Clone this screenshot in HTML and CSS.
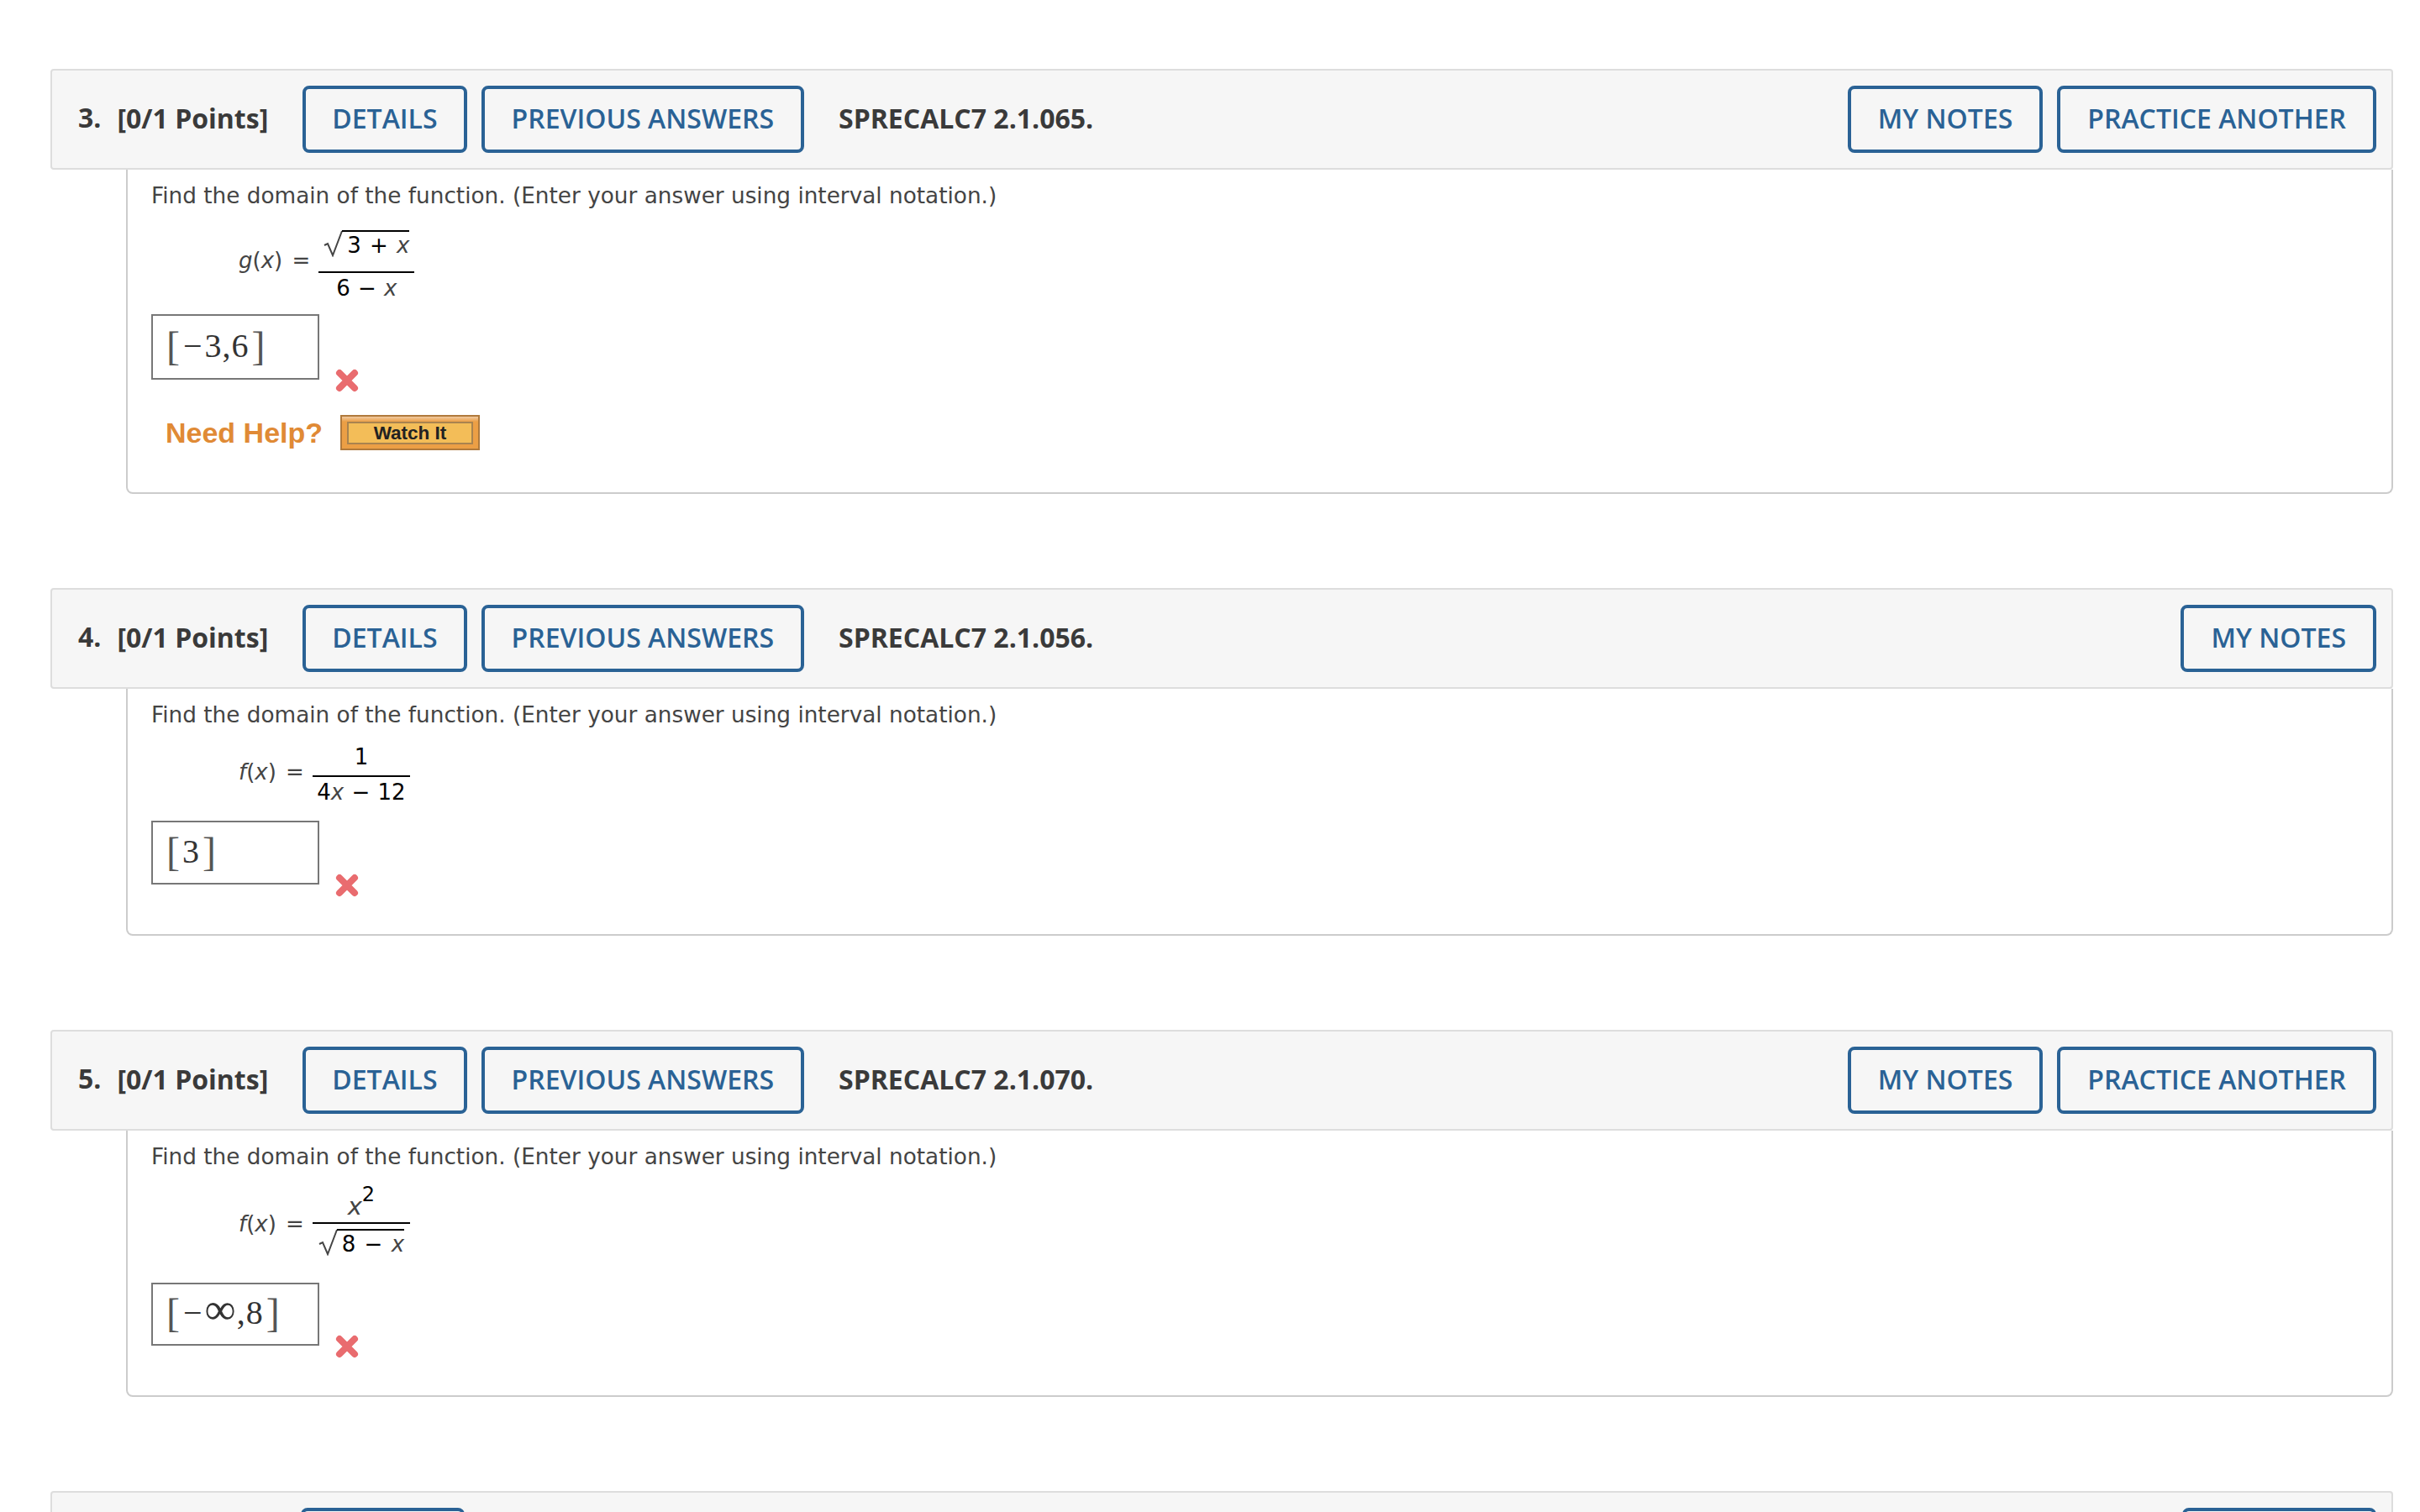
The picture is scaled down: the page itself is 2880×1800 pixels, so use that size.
FILE: index.html
```html
<!DOCTYPE html>
<html lang="en">
<head>
  <meta charset="UTF-8" />
  <title>Assignment questions</title>
  <link rel="stylesheet" href="styles.css">
</head>
<body>
  <section class="question">
    <header class="q-head">
      <span class="q-num">3.</span>
      <span class="q-points">[0/1 Points]</span>
      <a class="btn btn-first">DETAILS</a>
      <a class="btn">PREVIOUS ANSWERS</a>
      <span class="q-code">SPRECALC7 2.1.065.</span>
      <div class="q-actions">
        <a class="btn">MY NOTES</a>
        <a class="btn">PRACTICE ANOTHER</a>
      </div>
    </header>
    <div class="q-body">
      <p class="prompt">Find the domain of the function. (Enter your answer using interval notation.)</p>
      <div class="math math-q3">
        <span class="lhs"><i>g</i>(<i>x</i>) =</span>
        <span class="frac frac-q3">
          <span class="num">
            <span class="root">
              <svg class="radical" width="24" height="32" viewBox="0 0 24 32"><path d="M1 18 L5 16 L11 30 L22 1" fill="none" stroke="#444" stroke-width="2"/></svg>
              <span class="radicand">3 + <i>x</i></span>
            </span>
          </span>
          <span class="den">6 − <i>x</i></span>
        </span>
      </div>
      <div class="answer-row">
        <div class="answer answer-tall"><span class="br">[</span><span class="val"><span class="minus">−</span>3,6</span><span class="br">]</span></div>
        <svg class="wrong" width="28" height="28" viewBox="0 0 28 28"><path d="M5 5 L23 23 M23 5 L5 23" stroke="#e96c6f" stroke-width="8" stroke-linecap="round"/></svg>
      </div>
      <div class="help">
        <span class="help-label">Need Help?</span>
        <a class="watch"><span class="watch-inner">Watch It</span></a>
      </div>
    </div>
  </section>

  <section class="question">
    <header class="q-head">
      <span class="q-num">4.</span>
      <span class="q-points">[0/1 Points]</span>
      <a class="btn btn-first">DETAILS</a>
      <a class="btn">PREVIOUS ANSWERS</a>
      <span class="q-code">SPRECALC7 2.1.056.</span>
      <div class="q-actions">
        <a class="btn">MY NOTES</a>
      </div>
    </header>
    <div class="q-body">
      <p class="prompt">Find the domain of the function. (Enter your answer using interval notation.)</p>
      <div class="math math-q4">
        <span class="lhs"><i>f</i>(<i>x</i>) =</span>
        <span class="frac frac-q4">
          <span class="num">1</span>
          <span class="den">4<i>x</i> − 12</span>
        </span>
      </div>
      <div class="answer-row">
        <div class="answer"><span class="br">[</span><span class="val">3</span><span class="br">]</span></div>
        <svg class="wrong" width="28" height="28" viewBox="0 0 28 28"><path d="M5 5 L23 23 M23 5 L5 23" stroke="#e96c6f" stroke-width="8" stroke-linecap="round"/></svg>
      </div>
    </div>
  </section>

  <section class="question">
    <header class="q-head">
      <span class="q-num">5.</span>
      <span class="q-points">[0/1 Points]</span>
      <a class="btn btn-first">DETAILS</a>
      <a class="btn">PREVIOUS ANSWERS</a>
      <span class="q-code">SPRECALC7 2.1.070.</span>
      <div class="q-actions">
        <a class="btn">MY NOTES</a>
        <a class="btn">PRACTICE ANOTHER</a>
      </div>
    </header>
    <div class="q-body">
      <p class="prompt">Find the domain of the function. (Enter your answer using interval notation.)</p>
      <div class="math math-q5">
        <span class="lhs"><i>f</i>(<i>x</i>) =</span>
        <span class="frac frac-q4">
          <span class="num"><span class="pow"><i>x</i><sup>2</sup></span></span>
          <span class="den den-root">
            <span class="root">
              <svg class="radical" width="24" height="32" viewBox="0 0 24 32"><path d="M1 18 L5 16 L11 30 L22 1" fill="none" stroke="#444" stroke-width="2"/></svg>
              <span class="radicand">8 − <i>x</i></span>
            </span>
          </span>
        </span>
      </div>
      <div class="answer-row">
        <div class="answer answer-short"><span class="br">[</span><span class="val"><span class="minus">−</span><span class="inf">∞</span>,8</span><span class="br">]</span></div>
        <svg class="wrong" width="28" height="28" viewBox="0 0 28 28"><path d="M5 5 L23 23 M23 5 L5 23" stroke="#e96c6f" stroke-width="8" stroke-linecap="round"/></svg>
      </div>
    </div>
  </section>

  <section class="question question-cut">
    <header class="q-head q-head-cut">
      <a class="btn btn-blank btn-blank-details"></a>
      <div class="q-actions">
        <a class="btn btn-blank btn-blank-notes"></a>
      </div>
    </header>
  </section>
</body>
</html>
```

FILE: styles.css
```css
html, body {
  margin: 0;
  padding: 0;
  height: 100%;
  overflow: hidden;
  background: #fff;
}
body {
  padding: 82px 32px 0 60px;
  box-sizing: border-box;
  font-family: "DejaVu Sans", sans-serif;
  color: #444;
}
.question {
  margin-bottom: 112px;
}
.question-cut {
  margin-bottom: 0;
}
.q-head {
  display: flex;
  align-items: center;
  height: 120px;
  box-sizing: border-box;
  padding: 0 18px 0 31px;
  background: #f6f6f6;
  border: 2px solid #ddd;
  border-radius: 4px;
  font-family: "Open Sans", sans-serif;
  font-size: 32px;
  font-weight: 700;
  color: #3a3a3a;
}
/* last row is cut by the window, only its top shows */
.q-head-cut {
  height: 26px;
  align-items: flex-start;
  padding-top: 18px;
  border-bottom: none;
  border-radius: 4px 4px 0 0;
  overflow: hidden;
}
.q-num {
  margin-right: 19px;
  padding-bottom: 2px;
  position: relative;
  top: -2px;
}
.q-points, .q-code {
  padding-bottom: 3px;
}
.btn {
  display: flex;
  align-items: center;
  height: 80px;
  flex-shrink: 0;
  box-sizing: border-box;
  padding: 0 32px 3px;
  margin-right: 17px;
  border: 4px solid #2a6295;
  border-radius: 8px;
  color: #2a6295;
  font-weight: 600;
  white-space: nowrap;
}
.btn-first {
  margin-left: 41px;
  padding: 0 31px 3px;
}
.btn-blank-details {
  width: 195px;
  margin-left: 265px;
}
.btn-blank-notes {
  width: 231px;
}
.q-code {
  margin-left: 24px;
}
.q-actions {
  display: flex;
  margin-left: auto;
}
.q-actions .btn:last-child {
  margin-right: 0;
}
.q-body {
  margin-left: 90px;
  padding-left: 28px;
  border: 2px solid #ccc;
  border-top: none;
  border-radius: 0 0 8px 8px;
  background: #fff;
}
.prompt {
  margin: 0;
  padding-top: 15px;
  font-size: 26.3px;
  line-height: 32px;
  color: #444;
}
.math {
  display: flex;
  align-items: center;
  margin-left: 104px;
  font-size: 26px;
}
.math-q3 {
  margin-top: 25px;
  margin-bottom: -3px;
}
.math-q3 .lhs {
  margin-bottom: 16px;
}
.math-q4 {
  margin-top: 16px;
}
.math-q4 .lhs {
  margin-bottom: 6px;
}
.math-q5 {
  margin-top: 21px;
}
.math-q5 .lhs {
  margin-bottom: 12px;
}
.lhs {
  margin-right: 10px;
  word-spacing: 3px;
}
.frac {
  display: flex;
  flex-direction: column;
  align-items: center;
  color: #000;
}
.frac i {
  color: #444;
}
.frac-q3 {
  width: 114px;
}
.frac-q4 {
  width: 116px;
}
.num {
  display: flex;
  justify-content: center;
  line-height: 36px;
  padding-bottom: 4px;
  width: 100%;
  border-bottom: 2px solid #000;
}
.num .radicand {
  padding-bottom: 11px;
}
.pow {
  margin: 4px 0 -4px;
}
.pow i {
  font-size: 29px;
}
.pow sup {
  font-size: 24px;
  line-height: 0;
  vertical-align: 16px;
}
.den {
  line-height: 36px;
  word-spacing: 1px;
}
.den-root {
  padding: 6px 0 14px;
}
.root {
  display: flex;
  align-items: flex-start;
}
.radical {
  margin-right: -2px;
}
.radicand {
  border-top: 2px solid #000;
  padding-left: 6px;
  line-height: 32px;
  word-spacing: 2px;
}
.answer-row {
  display: flex;
  align-items: flex-end;
  margin-top: 16px;
}
.answer-row:last-child {
  margin-bottom: 59px;
}
.answer {
  display: flex;
  align-items: center;
  width: 200px;
  height: 76px;
  box-sizing: border-box;
  padding: 0 0 4px 16px;
  border: 2px solid #777;
  font-family: "Liberation Serif", serif;
  color: #333;
}
.answer-tall {
  height: 78px;
}
.answer-short {
  height: 75px;
}
.br {
  font-size: 48px;
  color: #555;
}
.val {
  font-size: 40px;
  letter-spacing: 1px;
  margin: 0 3px;
}
.minus {
  margin: 0 2px 0 1px;
}
.inf {
  font-size: 52px;
  line-height: 0;
}
.wrong {
  margin: 0 0 -15px 19px;
}
.help {
  display: flex;
  align-items: center;
  margin: 42px 0 50px 17px;
}
.help-label {
  font-family: "Liberation Sans", sans-serif;
  font-size: 34px;
  font-weight: 700;
  color: #e08a35;
  margin-right: 21px;
}
.watch {
  display: flex;
  width: 166px;
  height: 42px;
  box-sizing: border-box;
  padding: 6px 6px 5px;
  border: 2px solid #b07a3c;
  background: linear-gradient(#f0c9a0 0, #ec9f45 6px);
}
.watch-inner {
  flex: 1;
  display: flex;
  align-items: center;
  justify-content: center;
  border: 2px solid #a9834f;
  background: #f3bd58;
  font-family: "Liberation Sans", sans-serif;
  font-size: 22.5px;
  font-weight: 700;
  color: #222;
}
```
